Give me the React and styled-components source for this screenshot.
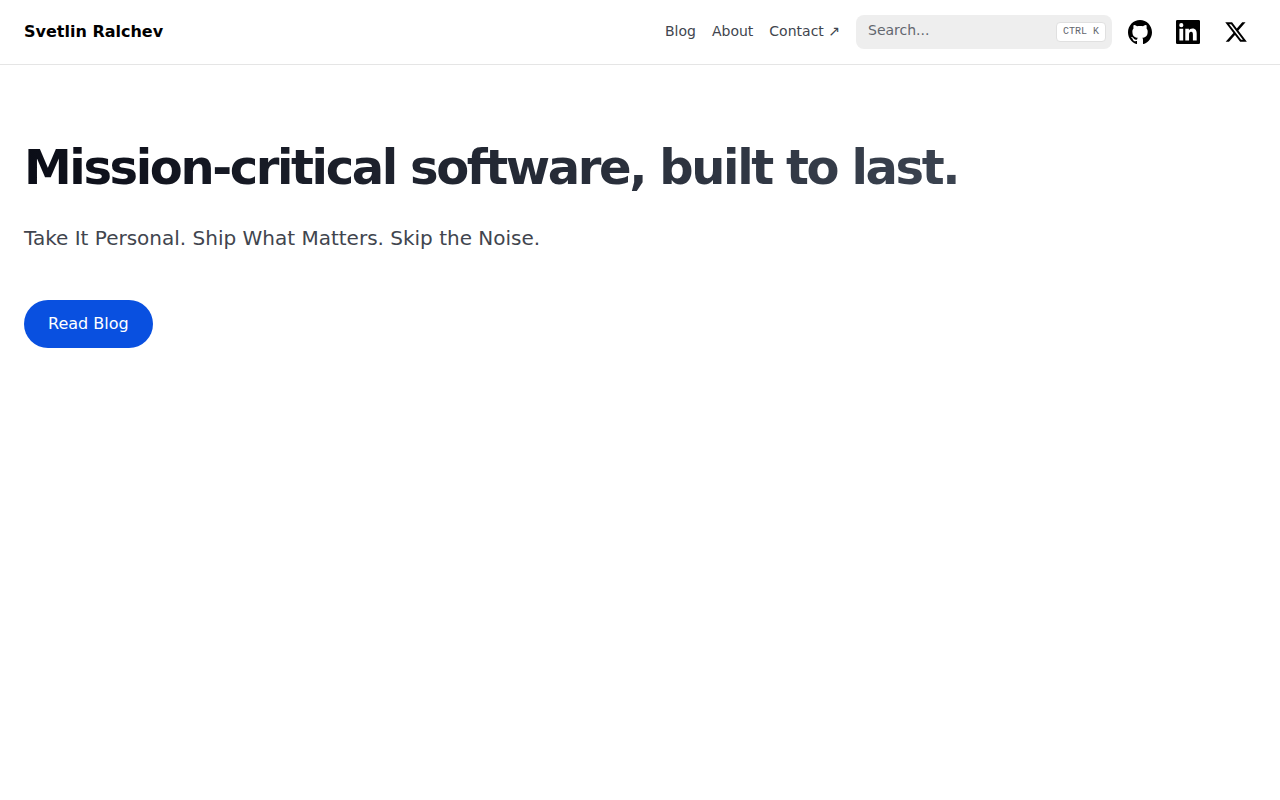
import React from 'react'
import styled, { createGlobalStyle } from 'styled-components'

const App = () => {
    return (
        <>
            <GlobalStyle />
            <Header>
                <Brand href="/">Svetlin Ralchev</Brand>
                <NavLinks aria-label="Main">
                    <NavLink href="/blog">Blog</NavLink>
                    <NavLink href="/about">About</NavLink>
                    <NavLink href="/contact">Contact ↗</NavLink>
                </NavLinks>
                <SearchBox>
                    <SearchInput type="search" placeholder="Search..." aria-label="Search" />
                    <Shortcut>CTRL K</Shortcut>
                </SearchBox>
                <IconLinks>
                    <IconLink href="/github" aria-label="GitHub">
                        <svg viewBox="3 3 18 18" fill="currentColor">
                            <path d="M12 3C7.0275 3 3 7.12937 3 12.2276C3 16.3109 5.57625 19.7597 9.15374 20.9824C9.60374 21.0631 9.77249 20.7863 9.77249 20.5441C9.77249 20.3249 9.76125 19.5982 9.76125 18.8254C7.5 19.2522 6.915 18.2602 6.735 17.7412C6.63375 17.4759 6.19499 16.6569 5.8125 16.4378C5.4975 16.2647 5.0475 15.838 5.80124 15.8264C6.51 15.8149 7.01625 16.4954 7.18499 16.7723C7.99499 18.1679 9.28875 17.7758 9.80625 17.5335C9.885 16.9337 10.1212 16.53 10.38 16.2993C8.3775 16.0687 6.285 15.2728 6.285 11.7432C6.285 10.7397 6.63375 9.9092 7.20749 9.26326C7.1175 9.03257 6.8025 8.08674 7.2975 6.81794C7.2975 6.81794 8.05125 6.57571 9.77249 7.76377C10.4925 7.55615 11.2575 7.45234 12.0225 7.45234C12.7875 7.45234 13.5525 7.55615 14.2725 7.76377C15.9937 6.56418 16.7475 6.81794 16.7475 6.81794C17.2424 8.08674 16.9275 9.03257 16.8375 9.26326C17.4113 9.9092 17.76 10.7281 17.76 11.7432C17.76 15.2843 15.6563 16.0687 13.6537 16.2993C13.98 16.5877 14.2613 17.1414 14.2613 18.0065C14.2613 19.2407 14.25 20.2326 14.25 20.5441C14.25 20.7863 14.4188 21.0746 14.8688 20.9824C16.6554 20.364 18.2079 19.1866 19.3078 17.6162C20.4077 16.0457 20.9995 14.1611 21 12.2276C21 7.12937 16.9725 3 12 3Z" />
                        </svg>
                    </IconLink>
                    <IconLink href="/linkedin" aria-label="LinkedIn">
                        <svg viewBox="0 0 24 24" fill="currentColor">
                            <path fillRule="evenodd" d="M1.3 0h21.4A1.3 1.3 0 0 1 24 1.3v21.4a1.3 1.3 0 0 1-1.3 1.3H1.3A1.3 1.3 0 0 1 0 22.7V1.3A1.3 1.3 0 0 1 1.3 0zM3.4 8.7h3.8v11.8H3.4zM5.3 3.1a2.1 2.1 0 1 1 0 4.2 2.1 2.1 0 0 1 0-4.2zM9.3 8.7h3.6v1.6h.05c.5-.95 1.7-1.9 3.45-1.9 3.5 0 4.3 2.4 4.3 5.5v6.6h-3.8v-5.8c0-1.4-.05-3-1.85-3-1.7 0-2 1.4-2 2.9v5.9H9.3z" />
                        </svg>
                    </IconLink>
                    <IconLink href="/x" aria-label="X">
                        <svg viewBox="0 0 24 24" fill="currentColor">
                            <path d="M18.244 2.25h3.308l-7.227 8.26 8.502 11.24H16.17l-5.214-6.817L4.99 21.75H1.68l7.73-8.835L1.254 2.25H8.08l4.713 6.231zm-1.161 17.52h1.833L7.084 4.126H5.117z" />
                        </svg>
                    </IconLink>
                </IconLinks>
            </Header>
            <Hero>
                <Title>Mission-critical software, built to last.</Title>
                <Subtitle>Take It Personal. Ship What Matters. Skip the Noise.</Subtitle>
                <ReadButton href="/blog">Read Blog</ReadButton>
            </Hero>
        </>
    )
}

export default App

const GlobalStyle = createGlobalStyle`
    * {
        box-sizing: border-box;
    }

    body {
        margin: 0;
        background: #ffffff;
        color: #000000;
        font-family: 'DejaVu Sans', sans-serif;
        line-height: 24px;
    }
`

const Header = styled.header`
    /* Positioning */
    position: sticky;
    top: 0;
    z-index: 2;

    /* Display & Box Model */
    display: flex;
    align-items: center;
    gap: 16px;
    height: 65px;
    padding: 0 24px;

    /* Color & Background */
    background: #ffffff;
    border-bottom: 1px solid #e5e5e5;
`

const Brand = styled.a`
    margin-right: auto;

    color: #000000;
    font-size: 16px;
    font-weight: 700;
    text-decoration: none;
    white-space: nowrap;
`

const NavLinks = styled.nav`
    display: flex;
    gap: 16px;
    padding-bottom: 2px;
`

const NavLink = styled.a`
    color: #41454e;
    font-size: 14px;
    line-height: 20px;
    text-decoration: none;
    white-space: nowrap;

    &:hover {
        color: #111827;
    }
`

const SearchBox = styled.div`
    position: relative;
    width: 256px;
`

const SearchInput = styled.input`
    display: block;
    width: 100%;
    height: 34px;
    padding: 6px 12px 10px;

    background: #eeeeee;
    border: none;
    border-radius: 8px;
    outline: none;

    color: #111827;
    font-family: inherit;
    font-size: 14px;
    line-height: 18px;

    &::placeholder {
        color: #63676e;
        opacity: 1;
    }
`

/* sits over the right end of the search field */
const Shortcut = styled.kbd`
    position: absolute;
    top: 7px;
    right: 6px;

    height: 20px;
    padding: 0 6px;

    background: #ffffff;
    border: 1px solid #e0e0e0;
    border-radius: 4px;

    color: #63676e;
    font-family: 'Liberation Mono', monospace;
    font-size: 10px;
    line-height: 18px;
    pointer-events: none;
`

const IconLinks = styled.div`
    display: flex;
    gap: 24px;
    padding-right: 8px;
`

const IconLink = styled.a`
    display: flex;
    color: #000000;

    svg {
        width: 24px;
        height: 24px;
    }
`

const Hero = styled.main`
    padding: 72px 24px;
`

const Title = styled.h1`
    width: fit-content;
    margin: 0 0 27px;

    background: linear-gradient(to right, #0b0d17, #3b4350);
    background-clip: text;
    -webkit-background-clip: text;
    color: transparent;

    font-size: 48px;
    font-weight: 700;
    letter-spacing: -0.05em;
    line-height: 60px;
`

const Subtitle = styled.p`
    margin: 0 0 48px;

    color: #41454e;
    font-size: 20px;
    line-height: 28px;
`

const ReadButton = styled.a`
    display: inline-block;
    padding: 12px 24px;

    background: #0950e0;
    border-radius: 24px;

    color: #ffffff;
    font-size: 16px;
    text-decoration: none;
`
